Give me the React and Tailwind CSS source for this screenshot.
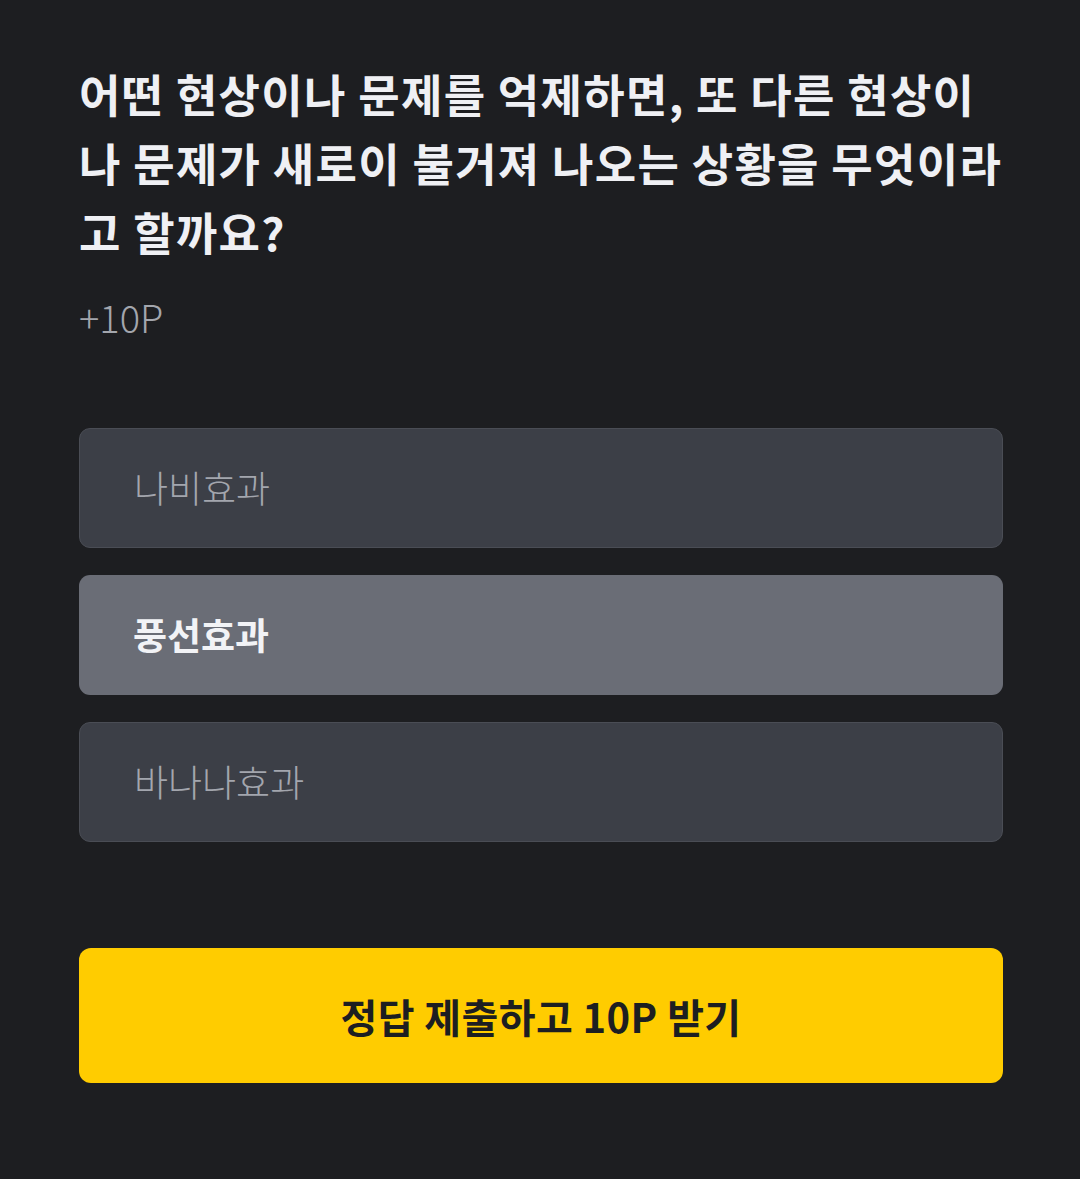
import React from 'react';

const options = [
    { label: '나비효과', selected: false },
    { label: '풍선효과', selected: true },
    { label: '바나나효과', selected: false },
];

const App = () => {
    return (
        <div
            className="min-h-[1179px] w-[1080px] bg-[#1d1e21] pl-[79px] pr-[77px] pt-[59px]"
            style={{ fontFamily: '"Noto Sans CJK KR", "Noto Sans", sans-serif' }}
        >
            <h1 className="whitespace-nowrap text-[45px] font-bold leading-[69px] tracking-[1.3px] text-[#eff0f4]">
                어떤 현상이나 문제를 억제하면, 또 다른 현상이
                <br />
                나 문제가 새로이 불거져 나오는 상황을 무엇이라
                <br />
                고 할까요?
            </h1>
            <p className="mt-[26px] text-[38px] font-light leading-[50px] text-[#a3a6ad]">+10P</p>

            <div className="mt-[86px] flex flex-col gap-[27px]">
                {options.map((o) => (
                    <div
                        key={o.label}
                        className={
                            o.selected
                                ? 'flex h-[120px] items-center rounded-[11px] bg-[#6a6d76] pl-[54px] text-[37px] font-bold text-[#f2f3f6]'
                                : 'flex h-[120px] items-center rounded-[11px] border border-[#4a4d55] bg-[#3c3f47] pl-[54px] text-[37px] font-light text-[#a3a6ae]'
                        }
                    >
                        {o.label}
                    </div>
                ))}
            </div>

            <button className="mt-[106px] flex h-[135px] w-full items-center justify-center rounded-[12px] bg-[#ffcc00] text-[40px] font-bold tracking-[0.4px] text-[#1d1e21]">
                정답 제출하고 10P 받기
            </button>
        </div>
    );
};

export default App;
